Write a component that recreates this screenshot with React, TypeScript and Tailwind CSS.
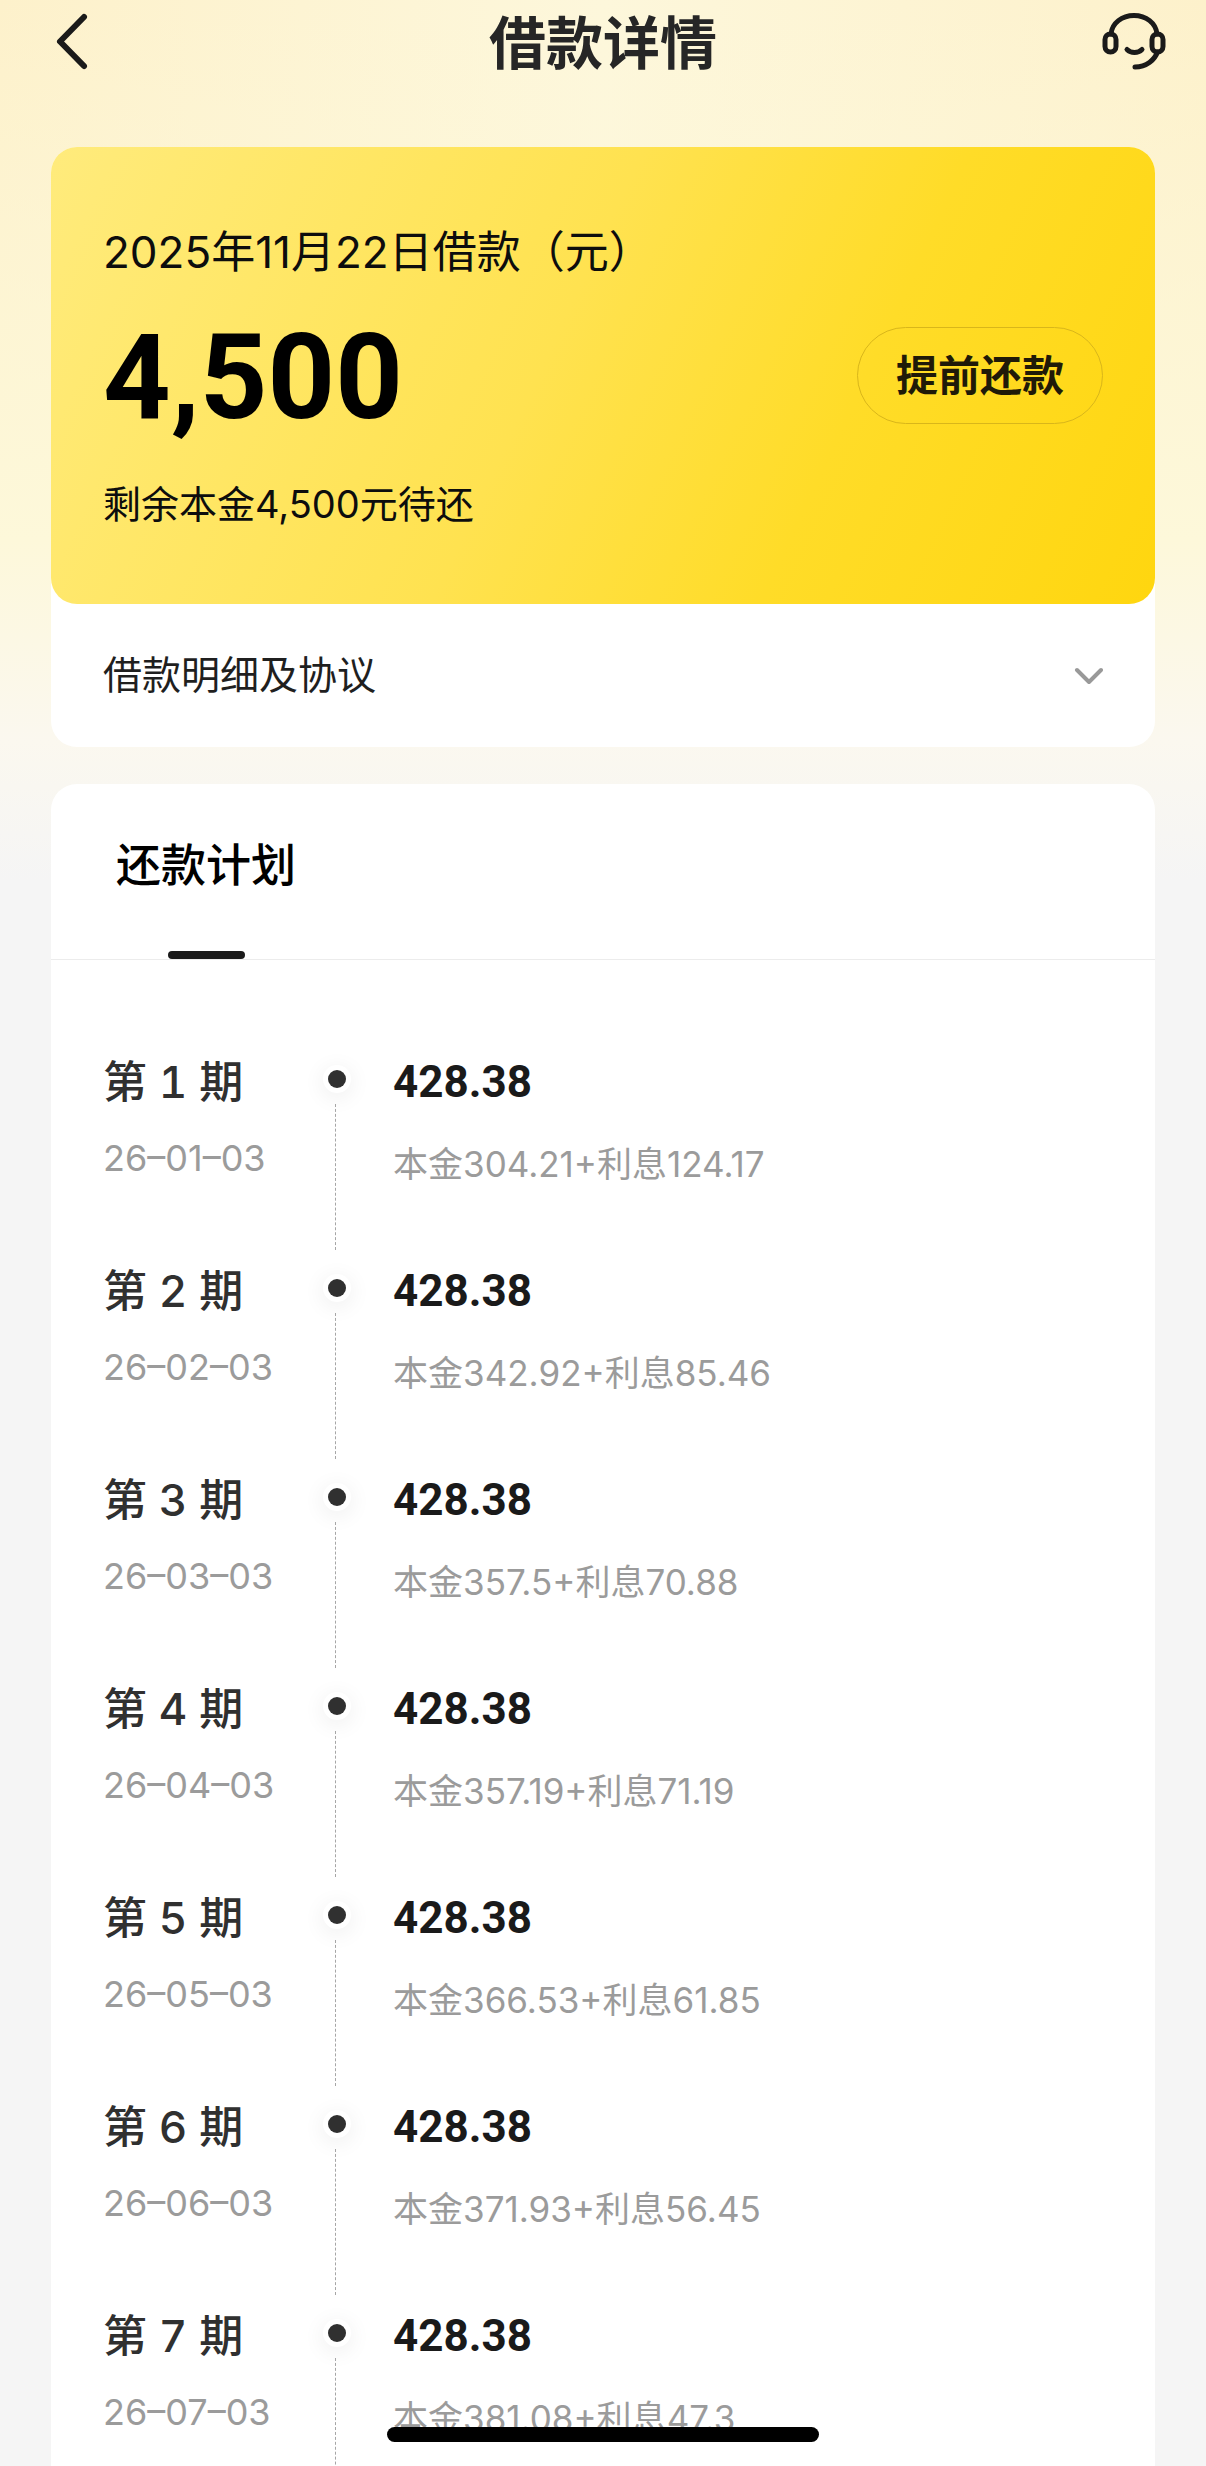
interface Installment {
  period: number;
  date: string;
  amount: string;
  principal: string;
  interest: string;
}

const installments: Installment[] = [
  { period: 1, date: "26–01–03", amount: "428.38", principal: "304.21", interest: "124.17" },
  { period: 2, date: "26–02–03", amount: "428.38", principal: "342.92", interest: "85.46" },
  { period: 3, date: "26–03–03", amount: "428.38", principal: "357.5", interest: "70.88" },
  { period: 4, date: "26–04–03", amount: "428.38", principal: "357.19", interest: "71.19" },
  { period: 5, date: "26–05–03", amount: "428.38", principal: "366.53", interest: "61.85" },
  { period: 6, date: "26–06–03", amount: "428.38", principal: "371.93", interest: "56.45" },
  { period: 7, date: "26–07–03", amount: "428.38", principal: "381.08", interest: "47.3" },
];

function BackIcon() {
  return (
    <svg
      viewBox="0 0 36 60"
      fill="none"
      stroke="currentColor"
      strokeWidth={6}
      strokeLinecap="round"
      strokeLinejoin="round"
      className="h-[60px] w-9"
      aria-hidden="true"
    >
      <path d="M30 5 6 29.5 30 54" />
    </svg>
  );
}

function HeadsetIcon() {
  return (
    <svg
      viewBox="0 0 64 60"
      fill="none"
      stroke="currentColor"
      strokeWidth={5}
      strokeLinecap="round"
      strokeLinejoin="round"
      className="h-[60px] w-16"
      aria-hidden="true"
    >
      <path d="M9 22C10 11 20 3.500 32 3.500S54 11 55 22" />
      <rect x={3} y={22} width={11} height={18} rx={5.5} />
      <rect x={50} y={22} width={11} height={18} rx={5.5} />
      <path d="M25 37.500c4 4 11 4 15 0" />
      <path d="M55.500 40c-3 8-11 15-22.500 15" />
    </svg>
  );
}

function ChevronDownIcon() {
  return (
    <svg
      viewBox="0 0 32 24"
      fill="none"
      stroke="currentColor"
      strokeWidth={4}
      strokeLinecap="round"
      strokeLinejoin="round"
      className="h-6 w-8 text-[#999999]"
      aria-hidden="true"
    >
      <path d="M6 6l12 12L30 6" />
    </svg>
  );
}

function InstallmentRow({ item }: { item: Installment }) {
  return (
    <li className="flex h-[209px]">
      <div className="w-[214px] shrink-0">
        <p className="text-[44px] font-medium leading-[64px] tabular-nums text-[#303030]">第 {item.period} 期</p>
        <p className="mt-4 text-[36px] leading-[56px] text-[#9b9b9b]">{item.date}</p>
      </div>

      <div className="flex w-9 shrink-0 flex-col items-center" aria-hidden="true">
        <span className="mt-5 ml-1 h-[18px] w-[18px] shrink-0 rounded-full bg-[#303030] shadow-[0_0_0_5px_#ffffff,0_4px_20px_8px_rgba(0,0,0,0.05)]" />
        <span className="mt-4 h-[146px] border-l border-dashed border-[#a6a6a6]" />
      </div>

      <div className="ml-10 min-w-0 flex-1">
        <p className="font-[Roboto,sans-serif] text-[44px] font-bold leading-[64px] text-[#1a1a1a]">{item.amount}</p>
        <p className="mt-[22px] text-[35px] leading-[56px] text-[#9b9b9b]">
          本金{item.principal}+利息{item.interest}
        </p>
      </div>
    </li>
  );
}

export default function App() {
  return (
    <div className="h-screen overflow-y-auto bg-[#f5f5f5] font-[Inter,'Noto_Sans_CJK_SC',sans-serif] [scrollbar-width:none]">
      <div className="bg-[linear-gradient(to_bottom,transparent_0,#fdf8da_540px,#fbf8ef_740px,#f5f5f5_880px),linear-gradient(to_right,#fdf1cb,#fdf7db_50%,#fdf1cb)]">
        <header className="flex h-[147px] items-start justify-between px-10 pt-3">
          <button type="button" aria-label="返回" className="w-16 pl-3.5 text-[#1a1a1a]">
            <BackIcon />
          </button>
          <h1 className="text-[57px] font-bold leading-[64px] text-[#262626]">借款详情</h1>
          <button type="button" aria-label="客服" className="w-16 text-[#1a1a1a]">
            <HeadsetIcon />
          </button>
        </header>

        <main className="px-[51px]">
          <section className="rounded-[26px] bg-white">
            <div className="flex h-[457px] items-center justify-between rounded-[26px] bg-[linear-gradient(115deg,#ffeb7c_0%,#ffe250_45%,#ffdc28_70%,#ffd60f_100%)] px-[52px]">
              <div>
                <p className="text-[44px] leading-[64px] text-[#0d0d0d]">2025年11月22日借款（元）</p>
                <p className="mt-6 font-[Roboto,sans-serif] text-[118px] font-bold leading-[140px] text-black">4,500</p>
                <p className="mt-7 text-[38px] leading-[56px] text-[#0d0d0d]">剩余本金4,500元待还</p>
              </div>
              <button
                type="button"
                className="h-[97px] w-[246px] rounded-full border border-[#d9b61a] text-[42px] font-bold text-[#1f1a08]"
              >
                提前还款
              </button>
            </div>
            <button type="button" className="flex h-[143px] w-full items-center justify-between px-[52px] text-[39px] text-[#1f1f1f]">
              <span>借款明细及协议</span>
              <ChevronDownIcon />
            </button>
          </section>

          <section className="mt-[37px] rounded-t-[26px] bg-white">
            <div className="flex h-44 border-b border-[#ececec]">
              <h2 className="flex flex-col items-center pl-[65px] text-[45px] font-medium text-black">
                <span className="mt-[50px] leading-[64px]">还款计划</span>
                <span className="mt-auto h-2 w-[77px] rounded-full bg-[#1a1a1a]" />
              </h2>
            </div>
            <ul className="px-[52px] pt-[90px]">
              {installments.map((item) => (
                <InstallmentRow key={item.period} item={item} />
              ))}
            </ul>
          </section>
        </main>
      </div>

      <div className="fixed bottom-6 left-1/2 h-[15px] w-[432px] -translate-x-1/2 rounded-full bg-black" aria-hidden="true" />
    </div>
  );
}
